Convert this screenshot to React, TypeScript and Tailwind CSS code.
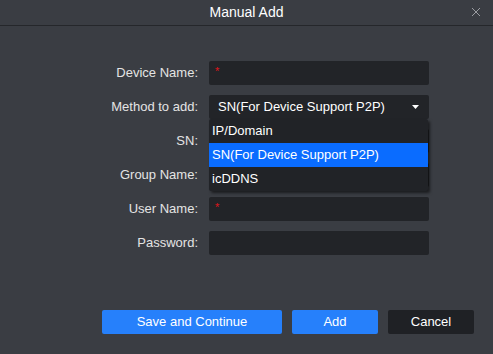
import React from 'react';

const rows = [
  { label: 'Device Name:', required: true },
  { label: 'Method to add:', select: true },
  { label: 'SN:' },
  { label: 'Group Name:' },
  { label: 'User Name:', required: true },
  { label: 'Password:' },
];

const options = ['IP/Domain', 'SN(For Device Support P2P)', 'icDDNS'];

export default function App() {
  return (
    <div
      className="w-[493px] h-[354px] bg-[#3a3d43] text-[13px] text-[#e6e6e6] flex flex-col"
      style={{ fontFamily: '"Liberation Sans", Arial, sans-serif' }}
    >
      {/* header */}
      <div className="relative h-[26px] flex items-center justify-center border-b border-[#25272b] shrink-0">
        <span className="text-[14px] text-white">Manual Add</span>
        <svg
          className="absolute right-[12px] top-[7px]"
          width="10"
          height="10"
          viewBox="0 0 10 10"
        >
          <path d="M1 1L9 9M9 1L1 9" stroke="#9a9ca1" strokeWidth="1" />
        </svg>
      </div>

      {/* form */}
      <div className="flex flex-col gap-[10px] pt-[35px]">
        {rows.map((row) => (
          <div key={row.label} className="flex items-center h-[24px]">
            <div className="w-[199px] text-right pr-[1px] text-[#e4e4e4]">{row.label}</div>
            <div className="relative ml-[10px] w-[220px] h-[24px] rounded-[2px] bg-[#222428]">
              {row.required && (
                <span className="absolute left-[6px] top-[5px] text-[11px] leading-none text-[#e0141a]">*</span>
              )}
              {row.select && (
                <>
                  <div className="flex items-center h-full pl-[9px] pr-[10px] justify-between text-white">
                    <span>SN(For Device Support P2P)</span>
                    <svg width="7" height="4" viewBox="0 0 7 4">
                      <path d="M0 0H7L3.5 4Z" fill="#ffffff" />
                    </svg>
                  </div>
                  <div className="absolute left-0 top-[24px] z-10 w-[219px] bg-[#212327] flex flex-col shadow-[2px_2px_3px_rgba(0,0,0,0.55)] rounded-[2px]">
                    {options.map((opt, i) => (
                      <div
                        key={opt}
                        className={
                          i === 1
                            ? 'h-[24px] flex items-center pl-[3px] bg-[#0a6cff] text-white'
                            : 'h-[24px] flex items-center pl-[3px] text-white'
                        }
                      >
                        {opt}
                      </div>
                    ))}
                  </div>
                </>
              )}
            </div>
          </div>
        ))}
      </div>

      {/* buttons */}
      <div className="flex justify-end gap-[10px] pr-[19px] mt-[55px]">
        <button className="w-[180px] h-[24px] rounded-[2px] bg-[#2680fb] text-white">Save and Continue</button>
        <button className="w-[86px] h-[24px] rounded-[2px] bg-[#2680fb] text-white">Add</button>
        <button className="w-[86px] h-[24px] rounded-[2px] bg-[#1f2125] text-white">Cancel</button>
      </div>
    </div>
  );
}
